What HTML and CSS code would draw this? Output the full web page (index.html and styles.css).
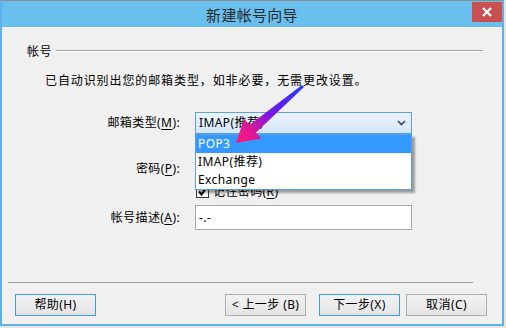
FILE: index.html
```html
<!DOCTYPE html>
<html lang="zh">
<head>
<meta charset="utf-8">
<link rel="stylesheet" href="styles.css">
</head>
<body>
<div class="window">
  <div class="titlebar">
    <div class="tb-side"></div>
    <div class="title">新建帐号向导</div>
    <div class="tb-side tb-right">
      <div class="close">
        <svg width="10" height="10" viewBox="0 0 10 10"><path d="M1 1 L9 9 M9 1 L1 9" stroke="#fff" stroke-width="2.2"/></svg>
      </div>
    </div>
  </div>
  <div class="body">
    <div class="group"><span class="group-label">帐号</span><div class="group-line"></div></div>
    <p class="intro">已自动识别出您的邮箱类型，如非必要，无需更改设置。</p>
    <div class="row row-type">
      <label class="lbl">邮箱类型(<u>M</u>):</label>
      <div class="combo">
        <span class="combo-text">IMAP(推荐)</span>
        <svg class="chev" width="9" height="6" viewBox="0 0 9 6"><path d="M1 1 L4.5 4.5 L8 1" fill="none" stroke="#444" stroke-width="1.6"/></svg>
        <ul class="list">
          <li class="sel">POP3</li>
          <li>IMAP(推荐)</li>
          <li>Exchange</li>
        </ul>
      </div>
    </div>
    <div class="row row-pass">
      <label class="lbl">密码(<u>P</u>):</label>
      <div class="input"></div>
    </div>
    <div class="row row-check">
      <span class="checkbox"><svg width="11" height="11" viewBox="0 0 11 11"><path d="M2 5.5 L4.5 8.5 L9.5 1.5" fill="none" stroke="#000" stroke-width="2"/></svg></span>
      <span class="check-text">记住密码(<u>R</u>)</span>
    </div>
    <div class="row row-desc">
      <label class="lbl">帐号描述(<u>A</u>):</label>
      <div class="input"><span class="input-text">-.-</span></div>
    </div>
    <div class="sep"></div>
    <div class="buttons">
      <button class="btn btn-blue">帮助(H)</button>
      <button class="btn btn-back">&lt; 上一步 (B)</button>
      <button class="btn btn-blue btn-next">下一步(X)</button>
      <button class="btn btn-cancel">取消(C)</button>
    </div>
  </div>
</div>
<svg class="arrow" width="506" height="328" viewBox="0 0 506 328">
  <defs>
    <linearGradient id="ag" gradientUnits="userSpaceOnUse" x1="303" y1="86" x2="236" y2="143">
      <stop offset="0" stop-color="#1f3cff"/>
      <stop offset="0.5" stop-color="#7a14e6"/>
      <stop offset="0.75" stop-color="#d8169a"/>
      <stop offset="1" stop-color="#ff1a78"/>
    </linearGradient>
  </defs>
  <polygon fill="url(#ag)" points="302,84.9 249.5,124.9 244.2,118.8 236,143 261.2,138.6 256,132.5 304,87.1"/>
</svg>
</body>
</html>
```

FILE: styles.css
```css
body {
  margin: 0;
  width: 506px;
  height: 328px;
  background: #e6e6e6;
  font-family: "Noto Sans", "Noto Sans CJK SC", sans-serif;
  font-size: 12px;
  letter-spacing: 0.4px;
  color: #000;
  overflow: hidden;
  position: relative;
}

.window {
  width: 504px;
  height: 326px;
  box-sizing: border-box;
  border: 2px solid #5cb2ea;
  border-top: 1px solid #8d8d8d;
  background: #f0f0f0;
  display: flex;
  flex-direction: column;
}

.titlebar {
  height: 26px;
  flex: none;
  background: #69c0ef;
  display: flex;
}

.tb-side {
  flex: 1;
  display: flex;
}

.tb-right {
  justify-content: flex-end;
  align-items: flex-start;
}

.title {
  font-size: 15px;
  line-height: 28px;
  letter-spacing: 0.3px;
  color: #2a2a2a;
}

.close {
  margin-top: 1px;
  width: 30px;
  height: 20px;
  background: #c75050;
  display: flex;
  align-items: center;
  justify-content: center;
}

.close svg {
  display: block;
}

.body {
  flex: 1;
  display: flex;
  flex-direction: column;
}

.group {
  margin-top: 18px;
  height: 14px;
  display: flex;
  padding: 0 19px 0 25px;
}

.group-label {
  line-height: 14px;
}

.group-line {
  flex: 1;
  margin-left: 4px;
  margin-top: 5px;
  height: 0;
  border-top: 1px solid #a0a0a0;
  border-bottom: 1px solid #ffffff;
}

.intro {
  margin: 15px 0 0;
  padding-left: 43px;
  line-height: 14px;
  letter-spacing: 0.9px;
}

.row {
  display: flex;
  align-items: center;
  gap: 15px;
}

.lbl {
  width: 178px;
  text-align: right;
  line-height: 14px;
}

u {
  text-underline-offset: 2px;
}

.row-type {
  margin-top: 24px;
  height: 22px;
}

.row-pass {
  margin-top: 23px;
  height: 23px;
}

.row-check {
  margin-top: 5px;
  height: 13px;
  padding-left: 194px;
  gap: 4px;
}

.row-desc {
  margin-top: 7px;
  height: 25px;
}

.combo {
  position: relative;
  width: 217px;
  height: 22px;
  box-sizing: border-box;
  border: 1px solid #5ba2e3;
  background: linear-gradient(#ecf4fc, #d3e7f8);
  display: flex;
  align-items: center;
  padding: 0 4px 0 3px;
  z-index: 2;
}

.combo-text {
  flex: 1;
  line-height: 14px;
}

.chev {
  display: block;
  margin-right: 1px;
}

.list {
  position: absolute;
  top: 21px;
  left: -1px;
  width: 217px;
  box-sizing: border-box;
  margin: 0;
  padding: 0;
  list-style: none;
  background: #fff;
  border: 1px solid #569de5;
  box-shadow: 3px 3px 2px rgba(0, 0, 0, 0.35);
}

.list li {
  height: 18px;
  line-height: 18px;
  padding-left: 2px;
}

.list li.sel {
  background: #3399ff;
  color: #fff;
}

.input {
  width: 217px;
  height: 100%;
  box-sizing: border-box;
  border: 1px solid #a9a9a9;
  background: #fff;
  display: flex;
  align-items: center;
  padding-left: 3px;
}

.input-text {
  line-height: 14px;
}

.checkbox {
  width: 13px;
  height: 13px;
  box-sizing: border-box;
  border: 1px solid #333;
  background: #fff;
  display: flex;
  align-items: center;
  justify-content: center;
}

.checkbox svg {
  display: block;
}

.check-text {
  line-height: 13px;
}

.sep {
  margin-top: 52px;
  margin-left: 6px;
  width: 465px;
  height: 0;
  border-top: 1px solid #a0a0a0;
}

.buttons {
  margin-top: 11px;
  display: flex;
  padding: 0 15px 0 13px;
}

.btn {
  width: 81px;
  height: 22px;
  box-sizing: border-box;
  border: 1px solid #adadad;
  background: linear-gradient(#f2f2f2, #e4e4e4);
  font-family: "Noto Sans", "Noto Sans CJK SC", sans-serif;
  font-size: 12px;
  letter-spacing: 0.4px;
  color: #000;
  padding: 0;
  line-height: 20px;
}

.btn-blue {
  border-color: #3d9be8;
}

.btn-back {
  margin-left: auto;
}

.btn-next {
  margin-left: 13px;
}

.btn-cancel {
  margin-left: 6px;
}

.arrow {
  position: absolute;
  top: 0;
  left: 0;
  z-index: 10;
  pointer-events: none;
}
```
